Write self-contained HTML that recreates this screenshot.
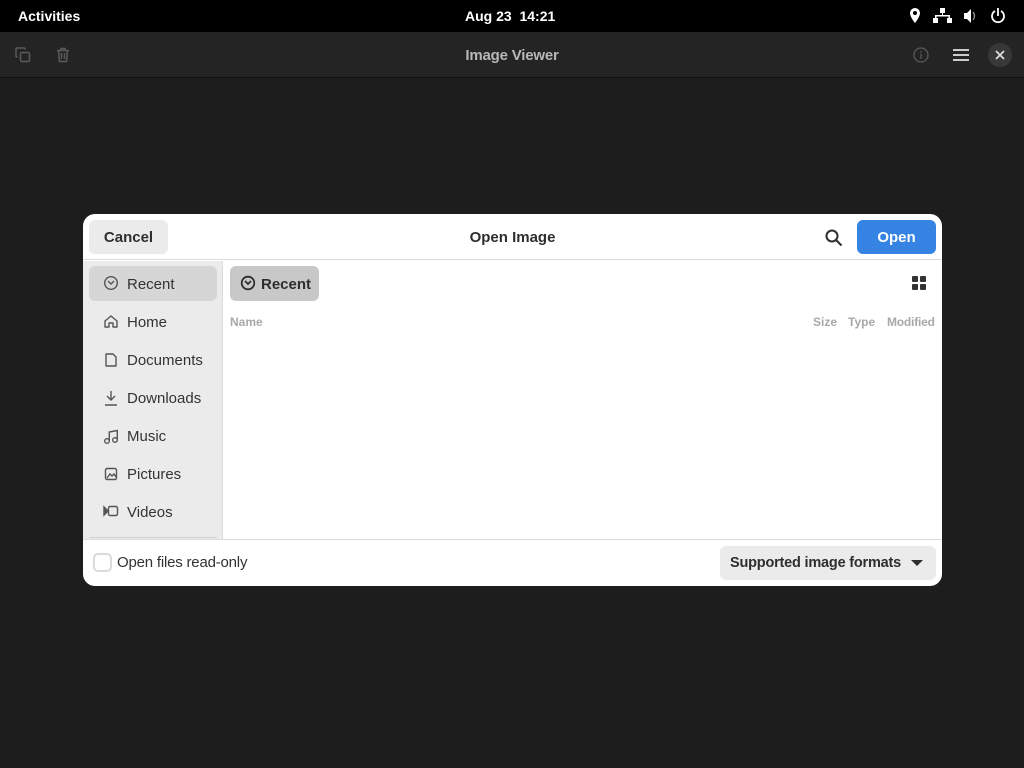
<!DOCTYPE html>
<html><head><meta charset="utf-8"><style>
*{margin:0;padding:0;box-sizing:border-box}
body{width:1024px;height:768px;background:#1d1d1d;font-family:"Liberation Sans","DejaVu Sans",sans-serif;position:relative;overflow:hidden}
.a{position:absolute}
#top{left:0;top:0;width:1024px;height:32px;background:#000;color:#fff;font-size:14px;font-weight:bold}
#hb{left:0;top:32px;width:1024px;height:46px;background:#242424;border-bottom:1px solid #111}
#dlg{left:83px;top:214px;width:859px;height:372px;background:#fff;border-radius:12px;overflow:hidden}
.t{font-size:15px;color:#2e2e2e}
.side{font-size:15px;color:#333}
</style></head><body>
<div id="top" class="a">
<div class="a" style="left:18px;top:8px">Activities</div>
<div class="a" style="left:465px;top:8px">Aug 23&nbsp; 14:21</div>
<svg class="a" style="left:906px;top:7px" width="104" height="18" viewBox="0 0 104 18" fill="#fff">
<path d="M9 1a5 5 0 0 0-5 5c0 4 5 10 5 10s5-6 5-10a5 5 0 0 0-5-5zm0 3a2 2 0 1 1 0 4 2 2 0 0 1 0-4z" fill-rule="evenodd"/>
<rect x="34" y="1" width="5" height="5"/><rect x="36" y="6" width="1" height="3"/><rect x="29" y="8" width="15" height="1.5"/><rect x="29" y="8" width="1.5" height="4"/><rect x="42.5" y="8" width="1.5" height="4"/><rect x="27" y="11" width="5" height="5"/><rect x="41" y="11" width="5" height="5"/>
<path d="M58 6h3l4-4v14l-4-4h-3z"/><path d="M67 5q3 4 0 8" stroke="#fff" fill="none" stroke-width="1.3" opacity=".6"/>
<path d="M89 4a6 6 0 1 0 6 0" stroke="#fff" fill="none" stroke-width="1.8"/><rect x="91.1" y="1" width="1.8" height="8"/>
</svg>
</div>
<div id="hb" class="a">
<svg class="a" style="left:15px;top:15px" width="16" height="16" viewBox="0 0 16 16" fill="none" stroke="#5a5a5a" stroke-width="1.5"><rect x="5.5" y="5.5" width="9" height="9" rx="1.5"/><path d="M10 2.5V2a1 1 0 0 0-1-1H2a1 1 0 0 0-1 1v7a1 1 0 0 0 1 1h.5"/></svg>
<svg class="a" style="left:55px;top:15px" width="16" height="16" viewBox="0 0 16 16" fill="none" stroke="#5a5a5a" stroke-width="1.5"><path d="M2 3.5h12M6 3.5V1.5h4v2M3.5 3.5l1 11h7l1-11M6.5 6v6M9.5 6v6"/></svg>
<div class="a" style="left:0;width:1024px;text-align:center;top:15px;color:#b8b8b8;font-size:15px;font-weight:bold;letter-spacing:-0.2px">Image Viewer</div>
<svg class="a" style="left:913px;top:15px" width="16" height="16" viewBox="0 0 16 16" fill="none" stroke="#5a5a5a" stroke-width="1.3"><circle cx="8" cy="8" r="7"/><path d="M8 7v5M8 4v1.5"/></svg>
<svg class="a" style="left:953px;top:16px" width="16" height="14" viewBox="0 0 16 14" fill="#ccc"><rect y="1" width="16" height="2"/><rect y="6" width="16" height="2"/><rect y="11" width="16" height="2"/></svg>
<div class="a" style="left:988px;top:11px;width:24px;height:24px;border-radius:12px;background:#383838"></div>
<svg class="a" style="left:995px;top:18px" width="10" height="10" viewBox="0 0 10 10" stroke="#ddd" stroke-width="1.8"><path d="M1 1l8 8M9 1l-8 8"/></svg>
</div>
<div id="dlg" class="a">
<div class="a" style="left:0;top:0;width:859px;height:46px;border-bottom:1px solid #dcdcdc"></div>
<div class="a" style="left:6px;top:6px;width:79px;height:34px;background:#ebebeb;border-radius:6px;text-align:center;line-height:34px;padding-top:1px"><span class="t" style="font-weight:bold">Cancel</span></div>
<div class="a t" style="left:0;width:859px;text-align:center;top:15px;font-weight:bold">Open Image</div>
<svg class="a" style="left:742px;top:15px" width="18" height="18" viewBox="0 0 18 18" fill="none" stroke="#2e2e2e" stroke-width="2"><circle cx="7" cy="7" r="5.5"/><path d="M11 11l5.5 5.5"/></svg>
<div class="a" style="left:774px;top:6px;width:79px;height:34px;background:#3584e4;border-radius:6px;text-align:center;line-height:36px;color:#fff;font-size:15px;font-weight:bold">Open</div>
<div class="a" style="left:0;top:47px;width:140px;height:278px;background:#ebebeb;border-right:1px solid #dcdcdc"></div>
<div class="a" style="left:6px;top:52px;width:128px;height:35px;background:#d6d6d6;border-radius:6px"></div>
<div class="a" style="left:6px;top:323px;width:128px;height:1px;background:#d0d0d0"></div>
<svg class="a" style="left:20px;top:61px" width="16" height="244" viewBox="0 0 16 244" fill="none" stroke="#555" stroke-width="1.4">
<circle cx="8" cy="8" r="6.3"/><path d="M5 6l3 3 3-3"/>
<path d="M2 52v-6l6-5 6 5v6h-4v-4h-4v4z" stroke-linejoin="round"/>
<path d="M3 79v12h10v-9l-3-3z" stroke-linejoin="round"/>
<path d="M8 116v9M4 121l4 4 4-4M2 130h12"/>
<circle cx="4" cy="166" r="2.3"/><circle cx="12" cy="165" r="2.3"/><path d="M6.3 166v-9l8-1.5v9"/>
<rect x="2.5" y="193.5" width="11" height="11" rx="1.5"/><path d="M4 203l3-4 2 2 2-2 2 3" />
<rect x="5.5" y="231.5" width="9" height="9" rx="1.5"/><path d="M1 232v8l4-4z" fill="#555"/>
</svg>
<div class="a side" style="left:44px;top:61px;line-height:20px">Recent</div>
<div class="a side" style="left:44px;top:99px;line-height:20px">Home</div>
<div class="a side" style="left:44px;top:137px;line-height:20px">Documents</div>
<div class="a side" style="left:44px;top:175px;line-height:20px">Downloads</div>
<div class="a side" style="left:44px;top:213px;line-height:20px">Music</div>
<div class="a side" style="left:44px;top:251px;line-height:20px">Pictures</div>
<div class="a side" style="left:44px;top:289px;line-height:20px">Videos</div>
<div class="a" style="left:147px;top:52px;width:89px;height:35px;background:#c8c8c8;border-radius:6px"></div>
<svg class="a" style="left:157px;top:61px" width="16" height="16" viewBox="0 0 16 16" fill="none" stroke="#2e2e2e" stroke-width="1.8"><circle cx="8" cy="8" r="6.3"/><path d="M5 6l3 3 3-3"/></svg>
<div class="a t" style="left:178px;top:61px;line-height:20px;font-weight:bold">Recent</div>
<svg class="a" style="left:829px;top:62px" width="14" height="14" viewBox="0 0 14 14" fill="#333"><rect width="6" height="6" rx="1"/><rect x="8" width="6" height="6" rx="1"/><rect y="8" width="6" height="6" rx="1"/><rect x="8" y="8" width="6" height="6" rx="1"/></svg>
<div class="a" style="left:147px;top:101px;font-size:12px;color:#a8a8a8;font-weight:bold">Name</div>
<div class="a" style="left:730px;top:101px;font-size:12px;color:#a8a8a8;font-weight:bold">Size</div>
<div class="a" style="left:765px;top:101px;font-size:12px;color:#a8a8a8;font-weight:bold">Type</div>
<div class="a" style="left:804px;top:101px;font-size:12px;color:#a8a8a8;font-weight:bold;letter-spacing:-0.2px">Modified</div>
<div class="a" style="left:0;top:325px;width:859px;height:1px;background:#dcdcdc"></div>
<div class="a" style="left:10px;top:339px;width:19px;height:19px;border:2px solid #dadada;border-radius:5px"></div>
<div class="a side" style="left:34px;top:339px;line-height:20px;letter-spacing:-0.2px">Open files read-only</div>
<div class="a" style="left:637px;top:332px;width:216px;height:34px;background:#ebebeb;border-radius:6px"></div>
<div class="a t" style="left:647px;top:339px;line-height:20px;font-weight:bold;font-size:14.5px;letter-spacing:-0.2px">Supported image formats</div>
<svg class="a" style="left:828px;top:345px" width="12" height="8" viewBox="0 0 12 8" fill="#2e2e2e"><path d="M0 1h12l-6 6z"/></svg>
</div>
</body></html>
